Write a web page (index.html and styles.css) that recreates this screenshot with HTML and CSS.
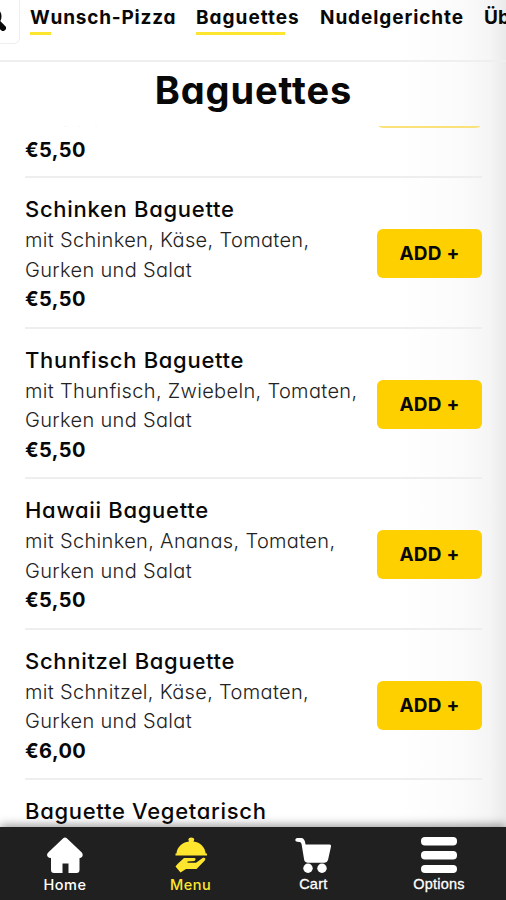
FILE: index.html
```html
<!DOCTYPE html>
<html lang="de">
<head>
<meta charset="utf-8">
<meta name="viewport" content="width=device-width, initial-scale=1">
<title>Baguettes</title>
<link rel="stylesheet" href="styles.css">
</head>
<body>
<div class="app">
  <header class="categories">
    <button class="search" aria-label="Suche">
      <svg viewBox="0 0 24 24" width="24" height="24"><circle cx="9.5" cy="9.5" r="7"/><path d="M15 15L21 21"/></svg>
    </button>
    <nav class="tabs">
      <a class="tab tab-wunsch">Wunsch-Pizza</a>
      <a class="tab tab-baguettes">Baguettes</a>
      <a class="tab tab-nudel">Nudelgerichte</a>
      <a class="tab tab-ueber">Üb</a>
    </nav>
  </header>
  <h1 class="heading">Baguettes</h1>
  <main class="list">
    <article class="item item-first">
      <div class="info"><p>mit Salat</p><strong>€5,50</strong></div>
      <div class="add"></div>
    </article>
    <article class="item">
      <div class="info"><h2>Schinken Baguette</h2><p>mit Schinken, Käse, Tomaten,<br>Gurken und Salat</p><strong>€5,50</strong></div>
      <button class="add">ADD +</button>
    </article>
    <article class="item">
      <div class="info"><h2>Thunfisch Baguette</h2><p>mit Thunfisch, Zwiebeln, Tomaten,<br>Gurken und Salat</p><strong>€5,50</strong></div>
      <button class="add">ADD +</button>
    </article>
    <article class="item">
      <div class="info"><h2>Hawaii Baguette</h2><p>mit Schinken, Ananas, Tomaten,<br>Gurken und Salat</p><strong>€5,50</strong></div>
      <button class="add">ADD +</button>
    </article>
    <article class="item">
      <div class="info"><h2>Schnitzel Baguette</h2><p>mit Schnitzel, Käse, Tomaten,<br>Gurken und Salat</p><strong>€6,00</strong></div>
      <button class="add">ADD +</button>
    </article>
    <article class="item">
      <div class="info"><h2>Baguette Vegetarisch</h2></div>
    </article>
  </main>
  <nav class="bottom">
    <a class="dest">
      <svg viewBox="0 0 36 36" width="36" height="36"><path d="M16.2 1.2Q18 -.3 19.8 1.2L34.8 15.5Q37 18.5 34 20.8L32.5 21V33Q32.5 36 29.5 36H21.5V26.5H15.5V36H7Q4 36 4 33V21L2 20.8Q-1.5 18.5 1.2 15.5Z"/></svg>
      <span>Home</span>
    </a>
    <a class="dest active">
      <svg viewBox="0 0 36 36" width="36" height="36"><path d="M3.5 16.5C4 10 9 5.2 16 4.4L15.3 2.5Q15.5.5 18.3.5T21.3 2.5L20.5 4.4C27.5 5.2 32 10 32.7 16.5H34V18.5H2.5V16.5ZM4.5 27L11 21H22Q23.5 22.5 21.5 24L14.5 24.5V25.7H23L30 20.7Q33.5 20.3 31.8 23.5L23.5 32H13L7.5 35.5L2.5 29.5Z"/></svg>
      <span>Menu</span>
    </a>
    <a class="dest dest-cart">
      <svg viewBox="0 0 36 36" width="36" height="36"><path d="M2.5 1H6.5Q10 1.5 10.5 7.5H34.5Q36.3 7.5 36 9.5L33 23Q32.3 25.7 29.5 25.7H13Q10 25.7 9.2 23L6.8 8.5Q6.5 5.2 4.5 5L2.2 4.8Q0 4.5 .3 2.7T2.5 1Z"/><circle cx="13" cy="31.2" r="4.7"/><circle cx="27" cy="31.2" r="4.7"/></svg>
      <span>Cart</span>
    </a>
    <a class="dest dest-options">
      <svg viewBox="0 0 36 36" width="36" height="36"><rect y="0" width="36" height="8.5" rx="4"/><rect y="14" width="36" height="8.5" rx="4"/><rect y="28" width="36" height="8" rx="4"/></svg>
      <span>Options</span>
    </a>
  </nav>
</div>
</body>
</html>
```
FILE: styles.css
```css
* { box-sizing: border-box; }

body {
  margin: 0;
  font-family: Inter, "Open Sans", sans-serif;
  font-feature-settings: "cv11";
  color: #080808;
}

.app {
  display: flex;
  flex-direction: column;
  width: 506px;
  height: 900px;
  overflow: hidden;
  background: linear-gradient(to right, #fff 400px, #fbfbfb 460px, #f5f5f5 490px, #eaeaea 506px);
}

.categories {
  display: flex;
  flex: none;
  height: 62px;
  border-bottom: 2px solid #efefef;
  overflow: hidden;
}

.search {
  flex: none;
  width: 48px;
  height: 60px;
  margin: -16px 0 0 -28px;
  padding: 0;
  border: 1px solid #eee;
  border-radius: 6px;
  background: #fff;
}
.search svg {
  display: block;
  margin-top: 10px;
  margin-left: 9px;
  fill: none;
  stroke: #080808;
  stroke-width: 6;
  stroke-linecap: round;
}

.tabs { display: flex; margin-left: 10px; }
.tab {
  flex: none;
  height: 35px;
  font-size: 19px;
  font-weight: 650;
  line-height: 35px;
  white-space: nowrap;
  background: linear-gradient(#ffe62e, #ffe62e) no-repeat 0 100% / 0 3px;
}
.tab-wunsch { width: 166px; letter-spacing: .8px; background-size: 21px 3px; }
.tab-baguettes { width: 124px; letter-spacing: 1px; background-size: 89px 3px; }
.tab-nudel { width: 164px; letter-spacing: .9px; }

.heading {
  flex: none;
  height: 64px;
  margin: 0;
  padding-left: 1px;
  font-size: 38px;
  font-weight: 700;
  line-height: 56px;
  text-align: center;
  letter-spacing: .9px;
}

.list {
  flex: 1;
  min-height: 0;
  padding: 0 24px 0 25px;
  overflow: hidden;
}
.item {
  display: flex;
  justify-content: space-between;
  height: 150.4px;
  padding-top: 16px;
  border-bottom: 2px solid #eee;
}
.item-first {
  height: 52.4px;
  padding: 0;
}
.item-first .info { margin-top: -21px; }
.item-first .info p {
  top: 0;
  color: #ddd;
}
.item-first .add {
  margin-top: -47px;
  background: #fae27a;
}

.info { white-space: nowrap; }
.info h2 {
  margin: 0;
  font-size: 22px;
  font-weight: 550;
  line-height: 31px;
  letter-spacing: .7px;
}
.info p {
  position: relative;
  top: 1px;
  margin: 0;
  font-size: 20px;
  font-weight: 300;
  line-height: 29.5px;
  letter-spacing: .33px;
  color: #222;
}
.info strong {
  display: block;
  font-size: 20px;
  font-weight: 650;
  line-height: 31px;
  letter-spacing: .4px;
}

.add {
  width: 105px;
  height: 49px;
  margin-top: 35px;
  padding: 0;
  border: 0;
  border-radius: 6px;
  background: #ffd000;
  color: #080808;
  font: 700 19px Inter, sans-serif;
  letter-spacing: .2px;
}

.bottom {
  position: relative;
  display: flex;
  flex: none;
  justify-content: space-between;
  height: 73px;
  padding: 10px 37px 0 35px;
  background: #202020;
  box-shadow: 0 -2px 9px rgba(0, 0, 0, .4);
}
.dest {
  display: flex;
  flex-direction: column;
  align-items: center;
  width: 60px;
  font: 500 14.5px Inter, sans-serif;
  letter-spacing: .5px;
  color: #fff;
}
.dest svg { display: block; fill: currentColor; }
.dest span { line-height: 23px; }
.active {
  margin-right: -1px;
  margin-left: 1px;
  color: #ffe62e;
}
.dest-cart,
.dest-options {
  font: 400 14.5px "Liberation Sans", sans-serif;
  letter-spacing: .2px;
  -webkit-text-stroke: .3px #fff;
}
.dest-cart { margin-right: 1px; margin-left: -1px; }
```
